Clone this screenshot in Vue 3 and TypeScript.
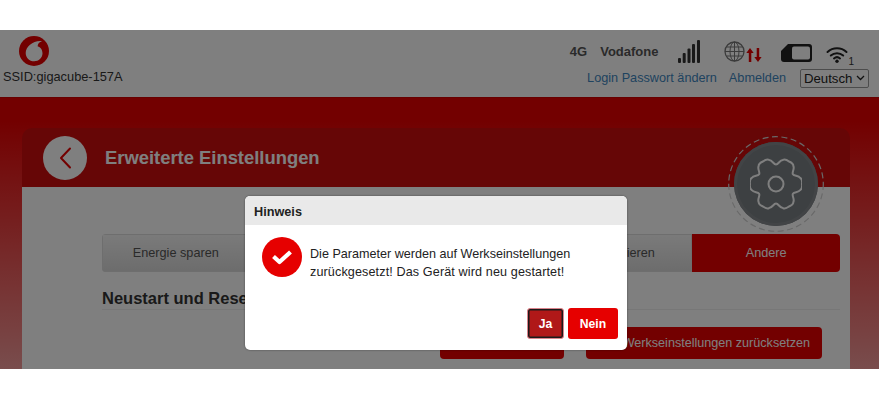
<script setup lang="ts">
const tabs = ['Energie sparen', '', '', 'Aktualisieren', 'Andere']

// six wide teeth around the middle of a 52px box
const gearPath = (() => {
  const c = 26
  const outer = 25.500
  const inner = 19.500
  const pt = (deg: number, r: number, side = 0) => {
    const a = (deg * Math.PI) / 180
    const x = c + r * Math.cos(a) - side * Math.sin(a)
    const y = c + r * Math.sin(a) + side * Math.cos(a)
    return `${x.toFixed(2)} ${y.toFixed(2)}`
  }
  let d = `M${pt(-30, inner)}`
  for (let i = 0; i < 6; i++) {
    const tip = i * 60
    d += `C${pt(tip - 30, inner, 2.500)} ${pt(tip - 18, outer - 1.500, -1.500)} ${pt(tip - 14, outer - 0.500)}`
    d += `C${pt(tip - 11, outer + 1)} ${pt(tip - 6, outer + 1)} ${pt(tip, outer + 0.500)}`
    d += `C${pt(tip + 6, outer + 1)} ${pt(tip + 11, outer + 1)} ${pt(tip + 14, outer - 0.500)}`
    d += `C${pt(tip + 18, outer - 1.500, 1.500)} ${pt(tip + 30, inner, -2.500)} ${pt(tip + 30, inner)}`
  }
  return d + 'Z'
})()
</script>

<template>
  <div class="stage">
    <header class="top">
      <div class="brand">
        <svg class="logo" width="30" height="30" viewBox="0 0 30 30">
          <circle cx="15" cy="15" r="15" fill="#e60000" />
          <path
            d="M23 5.200C20.300 5.800 18.800 7.800 18.600 10.200C21.600 11 23.500 14 23.500 17.300C23.500 21.900 19.700 25.300 15.200 25.300C10.400 25.300 6.700 21.700 6.700 17C6.700 10.500 14.500 4.200 23 5.200Z"
            fill="#fff"
          />
        </svg>
        <div class="ssid">SSID:gigacube-157A</div>
      </div>
      <div class="status">
        <div class="status-row">
          <span class="net">4G</span>
          <span class="net op">Vodafone</span>
          <svg class="sig" width="22" height="23" viewBox="0 0 22 23">
            <rect x="0" y="18" width="3" height="5" rx="1" />
            <rect x="4.700" y="13" width="3" height="10" rx="1" />
            <rect x="9.500" y="8.500" width="3" height="14.500" rx="1" />
            <rect x="14" y="4" width="3" height="19" rx="1" />
            <rect x="19" y="0" width="3" height="23" rx="1" />
          </svg>
          <svg class="globe" width="21" height="21" viewBox="0 0 21 21" fill="none" stroke="#777" stroke-width="1">
            <circle cx="10.500" cy="10.500" r="9.500" stroke-width="1.300" />
            <ellipse cx="10.500" cy="10.500" rx="4.500" ry="9.500" />
            <path d="M10.500 1v19M1 10.500h19M2.300 6h16.400M2.300 15h16.400" />
          </svg>
          <svg class="arrows" width="16" height="16" viewBox="0 0 16 16" fill="#e60000">
            <path d="M4 1l3.700 5H5.300v9H2.800V6H.3zM12 15l-3.700-5h2.400V1h2.500v9h2.400z" />
          </svg>
          <svg class="sim" width="31" height="18" viewBox="0 0 31 18">
            <path d="M7 0h21a3 3 0 0 1 3 3v12a3 3 0 0 1-3 3H3a3 3 0 0 1-3-3V7z" fill="#222" />
            <rect x="11" y="2.500" width="18" height="13" rx="2" fill="#fff" />
          </svg>
          <div class="wifi">
            <svg width="22" height="17" viewBox="0 0 22 17" fill="none" stroke="#222" stroke-width="2" stroke-linecap="round">
              <path d="M1.500 6a14 14 0 0 1 19 0M4.800 9.500a9.400 9.400 0 0 1 12.400 0M8 12.400a4.600 4.600 0 0 1 6 0" />
              <circle cx="11" cy="15.300" r="1.700" fill="#222" stroke="none" />
            </svg>
            <span class="wifi-n">1</span>
          </div>
        </div>
        <div class="links-row">
          <a class="link">Login Passwort ändern</a>
          <a class="link">Abmelden</a>
          <div class="lang">
            Deutsch
            <svg width="9" height="6" viewBox="0 0 9 6" fill="none" stroke="#222" stroke-width="1.300">
              <path d="M1 1l3.500 3.500L8 1" />
            </svg>
          </div>
        </div>
      </div>
    </header>

    <main class="page">
      <section class="card">
        <div class="card-head">
          <div class="back">
            <svg width="13" height="22" viewBox="0 0 13 22" fill="none" stroke="#e60000" stroke-width="2" stroke-linecap="round" stroke-linejoin="round">
              <path d="M11 1.500L2 11l9 9.500" />
            </svg>
          </div>
          <h1 class="title">Erweiterte Einstellungen</h1>
          <div class="gear-wrap">
            <svg class="dash" width="96" height="96" viewBox="0 0 96 96" fill="none" stroke="#d2d2d2" stroke-width="1.200" stroke-dasharray="6 3.500">
              <circle cx="48" cy="48" r="47.300" />
            </svg>
            <div class="gear">
              <svg width="52" height="52" viewBox="0 0 52 52" fill="none" stroke="#fff" stroke-width="2" stroke-linejoin="round">
                <path :d="gearPath" />
                <circle cx="26" cy="26" r="7.500" />
              </svg>
            </div>
          </div>
        </div>
        <div class="card-body">
          <div class="tabs">
            <div v-for="(t, i) in tabs" :key="i" class="tab" :class="{ active: i === tabs.length - 1 }">{{ t }}</div>
          </div>
          <h2 class="section">Neustart und Reset</h2>
          <div class="actions">
            <button class="btn first">Neustart</button>
            <button class="btn second">Werkseinstellungen zurücksetzen</button>
          </div>
        </div>
      </section>
    </main>

    <div class="overlay"></div>

    <div class="modal">
      <div class="modal-head">Hinweis</div>
      <div class="modal-body">
        <div class="ok">
          <svg width="20" height="15" viewBox="0 0 20 15" fill="none" stroke="#fff" stroke-width="4.200" stroke-linejoin="round">
            <path d="M1.500 6.500l6 5.500L18.500 2" />
          </svg>
        </div>
        <p class="msg">
          <span class="line">Die Parameter werden auf Werkseinstellungen</span>
          <span class="line wide">zurückgesetzt! Das Gerät wird neu gestartet!</span>
        </p>
      </div>
      <div class="modal-foot">
        <button class="mbtn ja">Ja</button>
        <button class="mbtn">Nein</button>
      </div>
    </div>
  </div>
</template>

<style>
html,
body {
  background: #fff;
}
</style>

<style scoped>
.stage {
  position: relative;
  margin-top: 30px;
  height: 339px;
  overflow: hidden;
  font-family: 'Liberation Sans', Arial, sans-serif;
  color: #333;
  background: #fff;
}

.top {
  height: 67px;
  box-sizing: border-box;
  display: flex;
  justify-content: space-between;
  background: #fff;
  padding: 6px 10px 0 3px;
}
.brand {
  display: flex;
  flex-direction: column;
}
.logo {
  margin-left: 16px;
  display: block;
}
.ssid {
  font-size: 12.800px;
  line-height: 15px;
  margin-top: 3px;
  color: #333;
}

.status {
  display: flex;
  flex-direction: column;
  align-items: flex-end;
}
.status-row {
  display: flex;
  align-items: center;
  height: 27px;
  margin-top: 2px;
  padding-right: 15px;
}
.net {
  font-size: 13px;
  font-weight: bold;
  color: #555;
}
.op {
  margin-left: 13px;
}
.sig {
  margin-left: 20px;
  fill: #333;
}
.globe {
  margin-left: 24px;
}
.arrows {
  margin-left: 1px;
  margin-top: 7px;
}
.sim {
  margin-left: 19px;
  margin-top: 2px;
}
.wifi {
  display: flex;
  align-items: flex-end;
  margin-left: 14px;
  margin-top: 6px;
}
.wifi-n {
  font-size: 10px;
  line-height: 10px;
  color: #333;
  margin-bottom: -4px;
}
.links-row {
  display: flex;
  align-items: center;
  height: 20px;
  margin-top: 3px;
}
.link {
  font-size: 12.700px;
  color: #3f86c0;
  margin-right: 12px;
}
.link + .lang {
  margin-left: 2px;
}
.lang {
  width: 69px;
  height: 19px;
  box-sizing: border-box;
  border: 1px solid #999;
  border-radius: 2px;
  background: #fff;
  font-size: 13.200px;
  color: #222;
  display: flex;
  align-items: center;
  justify-content: space-between;
  padding: 0 3px;
}

.page {
  height: 272px;
  box-sizing: border-box;
  padding: 30px 29px 0 22px;
  background: linear-gradient(180deg, #e60000 0%, #e60000 8%, #f29a9a 100%);
  border-top: 1px solid #d00000;
}
.card {
  border-radius: 10px;
}
.card-head {
  position: relative;
  height: 59px;
  display: flex;
  align-items: center;
  padding-left: 21px;
  border-radius: 10px 10px 0 0;
  background: #cc0d0d;
}
.back {
  width: 44px;
  height: 44px;
  border-radius: 50%;
  background: #fff;
  display: flex;
  align-items: center;
  justify-content: center;
}
.title {
  margin: 0 0 0 18px;
  font-size: 18.400px;
  font-weight: bold;
  color: #fff;
}
.gear-wrap {
  position: absolute;
  top: 8px;
  right: 26px;
  width: 96px;
  height: 96px;
  display: flex;
  align-items: center;
  justify-content: center;
  z-index: 1;
}
.dash {
  position: absolute;
  inset: 0;
}
.gear {
  width: 84px;
  height: 84px;
  border-radius: 50%;
  background: #7a8084;
  box-shadow: inset 0 0 0 3px #84898d;
  display: flex;
  align-items: center;
  justify-content: center;
}
.card-body {
  height: 182px;
  background: #fff;
  padding: 47px 10px 0 80px;
}
.tabs {
  display: grid;
  grid-template-columns: repeat(5, 1fr);
  height: 38px;
  border-radius: 4px;
  overflow: hidden;
}
.tab {
  display: flex;
  align-items: center;
  justify-content: center;
  font-size: 12.700px;
  color: #555;
  background: linear-gradient(180deg, #f6f6f6, #d9d9d9);
  box-shadow: inset 0 0 0 1px #ddd;
}
.tab.active {
  background: #e60000;
  color: #fff;
  box-shadow: none;
}
.section {
  margin: 17px 0 0;
  font-size: 16.500px;
  line-height: 19px;
  font-weight: bold;
  color: #333;
  padding-bottom: 1px;
  border-bottom: 1px solid #eee;
}
.actions {
  display: flex;
  justify-content: flex-end;
  gap: 22px;
  margin-top: 17px;
  padding-right: 18px;
}
.btn {
  height: 32px;
  border: 0;
  border-radius: 4px;
  background: #e60000;
  color: #fff;
  font-family: inherit;
  font-size: 12.600px;
  padding: 0;
}
.first {
  width: 124px;
}
.second {
  width: 236px;
  text-align: right;
  padding-right: 12px;
}

.overlay {
  position: absolute;
  inset: 0;
  z-index: 2;
  background: rgba(0, 0, 0, 0.5);
}

.modal {
  position: absolute;
  left: 245px;
  top: 166px;
  z-index: 3;
  width: 382px;
  height: 154px;
  border-radius: 5px;
  background: #fff;
  overflow: hidden;
  display: flex;
  flex-direction: column;
  box-shadow: 0 0 2px rgba(0, 0, 0, 0.5);
}
.modal-head {
  height: 29px;
  box-sizing: border-box;
  padding-left: 9px;
  line-height: 32px;
  font-size: 12.700px;
  font-weight: bold;
  color: #222;
  background: #e9e9e9;
}
.modal-body {
  display: flex;
  padding: 12px 20px 0 17px;
  height: 83px;
  box-sizing: border-box;
}
.ok {
  flex: none;
  width: 40px;
  height: 40px;
  border-radius: 50%;
  background: #e60000;
  display: flex;
  align-items: center;
  justify-content: center;
}
.msg {
  margin: 8px 0 0 8px;
  font-size: 12.600px;
  line-height: 18px;
  color: #222;
}
.line {
  display: block;
  white-space: nowrap;
}
.wide {
  letter-spacing: 0.120px;
}
.modal-foot {
  display: flex;
  justify-content: flex-end;
  align-items: flex-start;
  gap: 4px;
  padding-right: 9px;
}
.mbtn {
  width: 50px;
  height: 31px;
  border: 0;
  border-radius: 3px;
  background: #e60000;
  color: #fff;
  font-family: inherit;
  font-size: 12.200px;
  font-weight: bold;
  padding: 0;
}
.ja {
  width: 37px;
  background: #b01818;
  border: 1px solid #d9828a;
  box-shadow: inset 0 0 0 1.500px #1a1a1a;
}
</style>
